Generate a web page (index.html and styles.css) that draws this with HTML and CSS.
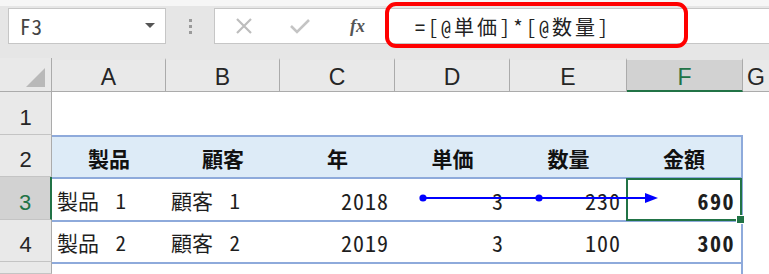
FILE: index.html
```html
<!DOCTYPE html>
<html lang="ja">
<head>
    <meta charset="UTF-8">
    <title>Excel 構造化参照</title>
    <link rel="stylesheet" href="styles.css">
</head>
<body>
<div class="toolbar">
    <div class="namebox">
        <span class="name">F3</span>
        <span class="caret"></span>
    </div>
    <div class="grip"><i></i><i></i><i></i></div>
    <div class="fbar">
        <svg class="ico" width="18" height="18" viewBox="0 0 18 18">
            <path d="M2 2L16 16M16 2L2 16" stroke="#bdbdbd" stroke-width="2.2" fill="none"/>
        </svg>
        <svg class="ico ok" width="20" height="18" viewBox="0 0 20 18">
            <path d="M1 9L7 15L19 3" stroke="#c4c4c4" stroke-width="2.6" fill="none"/>
        </svg>
        <span class="fx">fx</span>
        <div class="formula">=[@単価]*[@数量]</div>
        <div class="mark"></div>
    </div>
</div>

<div class="sheet">
    <!-- 列見出し -->
    <div class="corner"><span class="tri"></span></div>
    <div class="colhead">A</div>
    <div class="colhead">B</div>
    <div class="colhead">C</div>
    <div class="colhead">D</div>
    <div class="colhead">E</div>
    <div class="colhead sel">F</div>
    <div class="colhead last">G</div>

    <!-- 1行目 -->
    <div class="rowhead">1</div>
    <div class="cell"></div><div class="cell"></div><div class="cell"></div>
    <div class="cell"></div><div class="cell"></div><div class="cell"></div>
    <div class="cell"></div>

    <!-- 2行目 見出し -->
    <div class="rowhead">2</div>
    <div class="cell th">製品</div>
    <div class="cell th">顧客</div>
    <div class="cell th">年</div>
    <div class="cell th">単価</div>
    <div class="cell th">数量</div>
    <div class="cell th endcol">金額</div>
    <div class="cell top"></div>

    <!-- 3行目 -->
    <div class="rowhead sel">3</div>
    <div class="cell td">製品 1</div>
    <div class="cell td">顧客 1</div>
    <div class="cell td num">2018</div>
    <div class="cell td num">3</div>
    <div class="cell td num">230</div>
    <div class="cell td num bold endcol active">690</div>
    <div class="cell top"></div>

    <!-- 4行目 -->
    <div class="rowhead">4</div>
    <div class="cell td">製品 2</div>
    <div class="cell td">顧客 2</div>
    <div class="cell td num">2019</div>
    <div class="cell td num">3</div>
    <div class="cell td num">100</div>
    <div class="cell td num bold endcol">300</div>
    <div class="cell top"></div>

    <!-- 5行目 -->
    <div class="rowhead"></div>
    <div class="cell bottom"></div><div class="cell bottom"></div><div class="cell bottom"></div>
    <div class="cell bottom"></div><div class="cell bottom"></div><div class="cell bottom endcol"></div>
    <div class="cell"></div>

    <!-- 参照元トレース矢印 -->
    <svg class="trace" width="769" height="216" viewBox="0 0 769 216">
        <line x1="423" y1="140" x2="648" y2="140" stroke="#0000ff" stroke-width="2"/>
        <circle cx="423" cy="140" r="3.6" fill="#0000ff"/>
        <circle cx="539" cy="140" r="3.6" fill="#0000ff"/>
        <polygon points="645,135 658,140 645,145" fill="#0000ff"/>
    </svg>
</div>
</body>
</html>
```

FILE: styles.css
```css
*{
    margin: 0;
    padding: 0;
    box-sizing: border-box;
}
body{
    width: 769px;
    height: 274px;
    overflow: hidden;
    background-color: #fff;
    font-family: "Noto Sans CJK JP", sans-serif;
    font-feature-settings: "hwid";
    color: #1e1e1e;
}
.toolbar{
    display: flex;
    align-items: flex-start;
    height: 58px;
    padding-top: 8px;
    padding-left: 8px;
    background: linear-gradient(#f6f6f6 0, #f6f6f6 6px, #e6e6e6 6px);
}
.namebox{
    position: relative;
    width: 158px;
    height: 36px;
    background-color: #fff;
    border: 1px solid #c6c6c6;
    display: flex;
    align-items: center;
}
.name{
    margin-left: 11px;
    font-size: 21px;
    letter-spacing: 1px;
    color: #444;
}
.caret{
    position: absolute;
    right: 10px;
    top: 14px;
    border-left: 5px solid transparent;
    border-right: 5px solid transparent;
    border-top: 5px solid #555;
}
.grip{
    width: 48px;
    height: 36px;
    display: flex;
    flex-direction: column;
    align-items: center;
    justify-content: center;
    gap: 3px;
}
.grip i{
    display: block;
    width: 3px;
    height: 3px;
    background-color: #9a9a9a;
}
.fbar{
    position: relative;
    flex: 1;
    height: 36px;
    margin-right: -4px;
    background-color: #fff;
    border: 1px solid #c6c6c6;
    display: flex;
    align-items: center;
}
.ico{
    margin-left: 20px;
}
.ico.ok{
    margin-left: 37px;
}
.fx{
    margin-left: 40px;
    width: 16px;
    font-family: "Liberation Serif", serif;
    font-style: italic;
    font-weight: bold;
    font-size: 18px;
    color: #555;
}
.formula{
    margin-left: 49px;
    font-size: 20px;
    letter-spacing: 3px;
    color: #222;
}
.mark{
    position: absolute;
    left: 170px;
    top: -7px;
    width: 303px;
    height: 46px;
    border: 4px solid #ff0000;
    border-radius: 11px;
}
.sheet{
    position: relative;
    display: grid;
    grid-template-columns: 52px 114px 114px 115px 115px 117px 116px 1fr;
    grid-template-rows: 34px 43px 42px 43px 42px 1fr;
    height: 216px;
}
.corner{
    position: relative;
    background-color: #e9e9e9;
    border-right: 1px solid #ababab;
    border-bottom: 1px solid #ababab;
}
.tri{
    position: absolute;
    right: 6px;
    bottom: 4px;
    border-left: 19px solid transparent;
    border-bottom: 19px solid #b9b9b9;
}
.colhead{
    display: flex;
    align-items: center;
    justify-content: center;
    padding-top: 4px;
    background-color: #e9e9e9;
    border-right: 1px solid #ababab;
    border-bottom: 1px solid #ababab;
    border-top: 2px solid #e6e6e6;
    font-family: "Liberation Sans", sans-serif;
    font-size: 23px;
    color: #262626;
}
.colhead.sel{
    background-color: #d2d2d2;
    color: #217346;
    border-bottom: 2px solid #217346;
}
.colhead.last{
    justify-content: flex-start;
    padding-left: 4px;
    border-right: none;
}
.rowhead{
    display: flex;
    align-items: center;
    justify-content: center;
    padding-top: 9px;
    background-color: #e9e9e9;
    border-right: 1px solid #ababab;
    border-bottom: 1px solid #c4c4c4;
    font-family: "Liberation Sans", sans-serif;
    font-size: 22px;
    color: #262626;
}
.rowhead.sel{
    background-color: #d2d2d2;
    color: #217346;
    border-right: 2px solid #217346;
}
.cell{
    display: flex;
    align-items: center;
    font-size: 21px;
    white-space: pre;
}
.th{
    justify-content: center;
    padding-top: 2px;
    background-color: #ddebf7;
    border-top: 2px solid #8eaadb;
    font-weight: bold;
    color: #111;
}
.td{
    padding-left: 5px;
    word-spacing: 6px;
    border-top: 2px solid #8eaadb;
}
.num{
    justify-content: flex-end;
    padding-right: 6px;
    font-size: 22px;
    letter-spacing: 1px;
}
.bold{
    font-weight: bold;
    letter-spacing: 1.5px;
    padding-right: 6px;
}
.bottom{
    border-top: 2px solid #8eaadb;
}
.endcol{
    border-right: 2px solid #8eaadb;
}
.active{
    position: relative;
}
.active::after{
    content: "";
    position: absolute;
    left: -1px;
    top: -1px;
    right: -1px;
    bottom: -1px;
    border: 2px solid #217346;
}
.active::before{
    content: "";
    position: absolute;
    right: -4px;
    bottom: -4px;
    width: 7px;
    height: 7px;
    background-color: #217346;
    border: 1px solid #fff;
    z-index: 1;
}
.trace{
    position: absolute;
    left: 0;
    top: 0;
    pointer-events: none;
}
```
